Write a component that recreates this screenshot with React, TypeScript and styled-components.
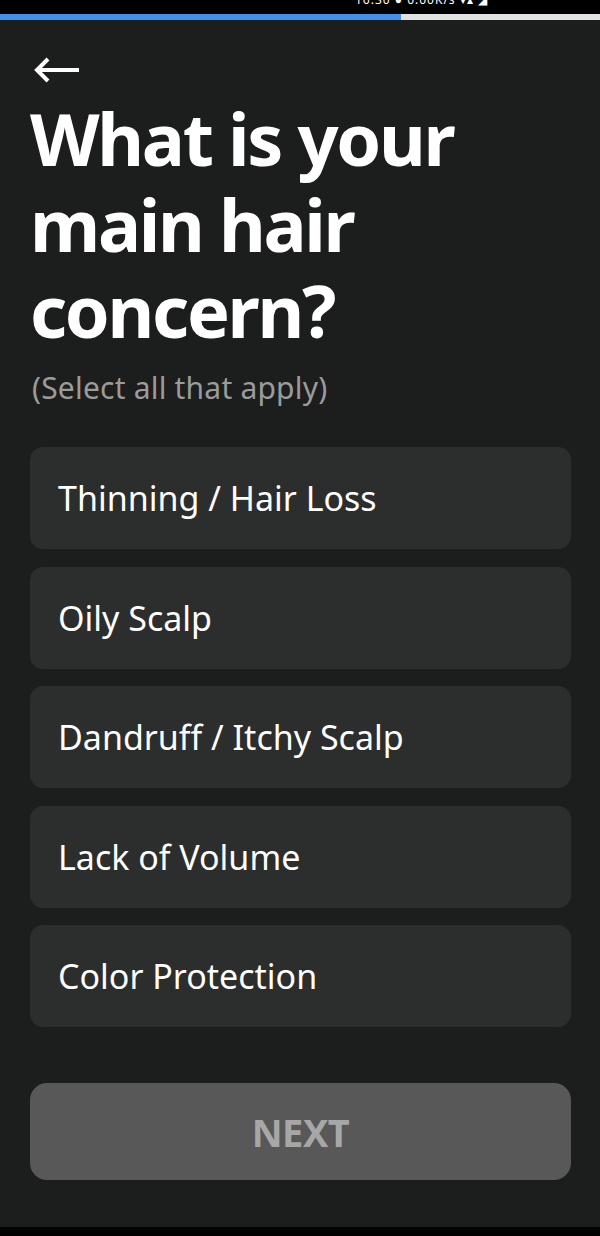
import React, { useState } from "react";
import styled, { createGlobalStyle } from "styled-components";

const Global = createGlobalStyle`
  html, body { margin: 0; padding: 0; background: #1c1d1d; }
  body { font-family: "Noto Sans", "Open Sans", sans-serif; }
  * { box-sizing: border-box; }
`;

const Screen = styled.div`
  width: 600px;
  height: 1236px;
  background: #1c1d1d;
  display: flex;
  flex-direction: column;
  overflow: hidden;
`;

const StatusBar = styled.div`
  height: 14px;
  background: #000;
  position: relative;
  overflow: hidden;
`;

const StatusText = styled.span`
  position: absolute;
  top: -9px;
  left: 355px;
  color: #fff;
  font-size: 12px;
  letter-spacing: 1px;
  white-space: nowrap;
`;

const Progress = styled.div`
  height: 6px;
  background: #e1e1e1;
  display: flex;
`;

const ProgressFill = styled.div`
  height: 100%;
  background: #4490e8;
`;

const Content = styled.div`
  flex: 1;
  display: flex;
  flex-direction: column;
  padding: 36px 29px 0 30px;
`;

const BackButton = styled.button`
  background: none;
  border: none;
  padding: 0;
  margin: 0 0 0 3px;
  width: 48px;
  height: 28px;
  display: flex;
  align-items: center;
  cursor: pointer;
`;

const Title = styled.h1`
  margin: 11px 0 0 0;
  color: #fff;
  font-size: 72px;
  line-height: 86px;
  font-weight: 700;
  letter-spacing: -2.3px;
`;

const Subtitle = styled.p`
  margin: 15px 0 0 2px;
  color: #9b9b9b;
  font-size: 30px;
  line-height: 40px;
  letter-spacing: 0.2px;
`;

const Options = styled.div`
  display: flex;
  flex-direction: column;
  gap: 17.5px;
  margin-top: 39px;
`;

const Option = styled.button<{ $selected: boolean }>`
  height: 102px;
  border-radius: 13px;
  border: none;
  background: ${(p) => (p.$selected ? "#3a3b3b" : "#2c2d2d")};
  color: #fff;
  text-align: left;
  padding: 0 28px;
  font-family: inherit;
  font-size: 34px;
  font-weight: 400;
  cursor: pointer;
`;

const NextButton = styled.button`
  margin-top: 56px;
  height: 97px;
  border-radius: 17px;
  border: none;
  background: #585858;
  color: #a7a7a7;
  font-family: inherit;
  font-size: 38px;
  font-weight: 700;
  letter-spacing: -0.5px;
`;

const Spacer = styled.div`
  flex: 1;
`;

const BottomBar = styled.div`
  height: 9px;
  background: #000;
`;

const options = [
  "Thinning / Hair Loss",
  "Oily Scalp",
  "Dandruff / Itchy Scalp",
  "Lack of Volume",
  "Color Protection",
];

export default function App() {
  const [sel, setSel] = useState<string[]>([]);
  const toggle = (o: string) =>
    setSel((s) => (s.includes(o) ? s.filter((x) => x !== o) : [...s, o]));
  return (
    <Screen>
      <Global />
      <StatusBar>
        <StatusText>16:30 ● 0.00K/s ▾▴ ◢</StatusText>
      </StatusBar>
      <Progress>
        <ProgressFill style={{ width: "401px" }} />
      </Progress>
      <Content>
        <BackButton aria-label="Back">
          <svg width="48" height="28" viewBox="0 0 48 28" fill="none">
            <path d="M46 14H4M15 3L4 14l11 11" stroke="#fff" strokeWidth="4" strokeLinecap="butt" strokeLinejoin="miter" />
          </svg>
        </BackButton>
        <Title>
          What is your
          <br />
          main hair
          <br />
          concern?
        </Title>
        <Subtitle>(Select all that apply)</Subtitle>
        <Options>
          {options.map((o) => (
            <Option key={o} $selected={sel.includes(o)} onClick={() => toggle(o)}>
              {o}
            </Option>
          ))}
        </Options>
        <NextButton disabled={sel.length === 0}>NEXT</NextButton>
        <Spacer />
      </Content>
      <BottomBar />
    </Screen>
  );
}
